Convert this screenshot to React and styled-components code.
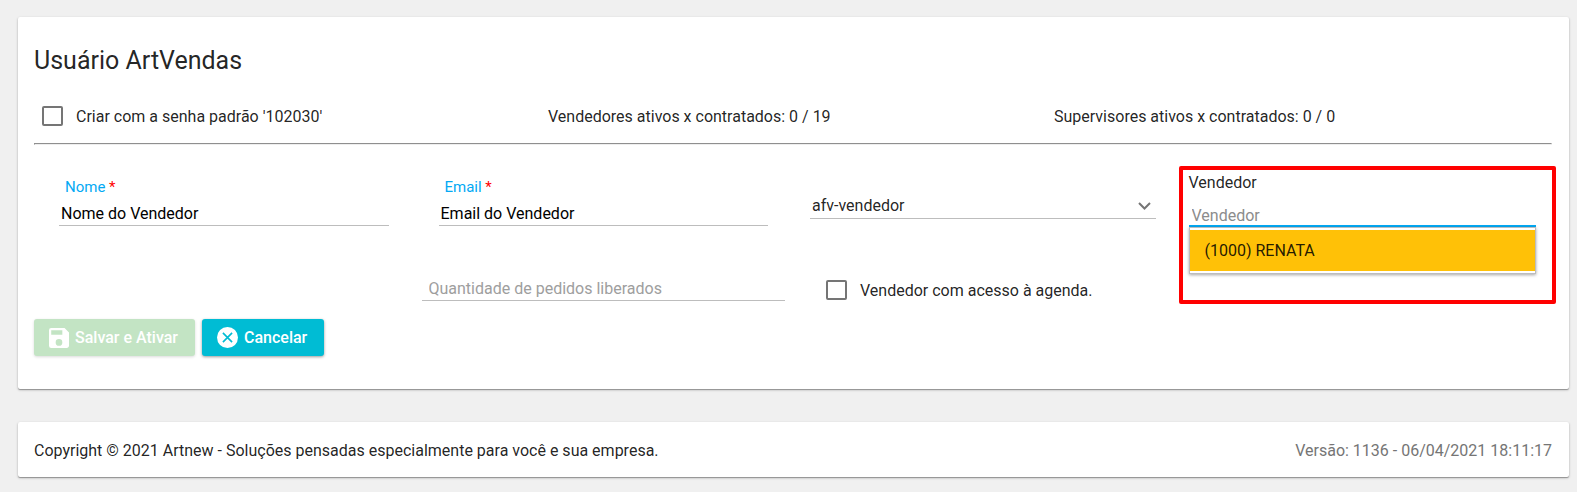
import React, { useState } from "react";
import styled, { createGlobalStyle } from "styled-components";

function App() {
  const [form, setForm] = useState({
    nome: "Nome do Vendedor",
    email: "Email do Vendedor",
    perfil: "afv-vendedor",
    vendedor: "",
    quantidade: "",
    senhaPadrao: false,
    agenda: false,
  });

  const handleChange = (e) => {
    const { name, type, value, checked } = e.target;
    setForm({ ...form, [name]: type === "checkbox" ? checked : value });
  };

  return (
    <Page>
      <GlobalStyle />
      <FormCard onSubmit={(e) => e.preventDefault()}>
        <Title>Usuário ArtVendas</Title>
        <InfoRow>
          <CheckLabel>
            <CheckBox
              type="checkbox"
              name="senhaPadrao"
              checked={form.senhaPadrao}
              onChange={handleChange}
            />
            Criar com a senha padrão '102030'
          </CheckLabel>
          <div>Vendedores ativos x contratados: 0 / 19</div>
          <div>Supervisores ativos x contratados: 0 / 0</div>
        </InfoRow>
        <Divider />
        <FieldRow>
          <Field $pd="10px 25px 0">
            <FloatLabel htmlFor="nome">
              Nome <Required>*</Required>
            </FloatLabel>
            <TextInput
              id="nome"
              name="nome"
              value={form.nome}
              onChange={handleChange}
            />
          </Field>
          <Field $pd="10px 25px 0">
            <FloatLabel htmlFor="email">
              Email <Required>*</Required>
            </FloatLabel>
            <TextInput
              id="email"
              name="email"
              value={form.email}
              onChange={handleChange}
            />
          </Field>
          <Field $pd="25px 17px 0">
            <SelectBox>
              <Select
                name="perfil"
                aria-label="Perfil"
                value={form.perfil}
                onChange={handleChange}
              >
                <option value="afv-vendedor">afv-vendedor</option>
              </Select>
              <Chevron viewBox="0 0 13 8" aria-hidden="true">
                <path d="M1 1 6.5 6.5 12 1" />
              </Chevron>
            </SelectBox>
          </Field>
          <Field $pd="6px 16px 0">
            <Highlight />
            <SellerLabel htmlFor="vendedor">Vendedor</SellerLabel>
            <Autocomplete>
              <TextInput
                id="vendedor"
                name="vendedor"
                placeholder="Vendedor"
                autoComplete="off"
                $active
                value={form.vendedor}
                onChange={handleChange}
              />
              <Menu>
                <li>
                  <MenuItem
                    type="button"
                    onClick={() =>
                      setForm({ ...form, vendedor: "(1000) RENATA" })
                    }
                  >
                    (1000) RENATA
                  </MenuItem>
                </li>
              </Menu>
            </Autocomplete>
          </Field>
        </FieldRow>
        <ExtraRow>
          <QuantityField>
            <TextInput
              name="quantidade"
              aria-label="Quantidade de pedidos liberados"
              placeholder="Quantidade de pedidos liberados"
              $wide
              value={form.quantidade}
              onChange={handleChange}
            />
          </QuantityField>
          <AgendaField>
            <CheckLabel>
              <CheckBox
                type="checkbox"
                name="agenda"
                checked={form.agenda}
                onChange={handleChange}
              />
              Vendedor com acesso à agenda.
            </CheckLabel>
          </AgendaField>
        </ExtraRow>
        <Actions>
          <Button type="submit" $color="#c3e4c4" $muted disabled>
            <svg width="20" height="20" viewBox="3 3 18 18" aria-hidden="true">
              <path
                fill="#fff"
                d="M17 3H5a2 2 0 0 0-2 2v14a2 2 0 0 0 2 2h14c1.1 0 2-.9 2-2V7l-4-4zm-5 16a3 3 0 1 1 0-6 3 3 0 0 1 0 6zm3-10H5V5h10v4z"
              />
            </svg>
            Salvar e Ativar
          </Button>
          <Button type="button" $color="#00bcd4">
            <svg width="21" height="21" viewBox="0 0 22 22" aria-hidden="true">
              <circle cx="11" cy="11" r="11" fill="#fff" />
              <path
                d="M6.2 6.2l9.6 9.6M15.8 6.2l-9.6 9.6"
                stroke="#00bcd4"
                strokeWidth="1.7"
              />
            </svg>
            Cancelar
          </Button>
        </Actions>
      </FormCard>
      <Footer>
        <div>
          Copyright © 2021 Artnew - Soluções pensadas especialmente para você e
          sua empresa.
        </div>
        <Version>Versão: 1136 - 06/04/2021 18:11:17</Version>
      </Footer>
    </Page>
  );
}

const GlobalStyle = createGlobalStyle`
  * {
    box-sizing: border-box;
  }

  body {
    margin: 0;
    background-color: #f0f0f0;
    color: rgba(0, 0, 0, 0.87);
    font-family: Roboto, "Liberation Sans", sans-serif;
    font-size: 16px;
    line-height: 24px;
  }

  input, select, button {
    font: inherit;
  }
`;

const Page = styled.main`
  display: flex;
  flex-direction: column;
  gap: 33px;
  padding: 17px 8px 15px 18px;
`;

const FormCard = styled.form`
  padding: 24px 17px 33px 16px;
  background-color: #fff;
  border-radius: 2px;
  box-shadow: 0 1px 3px rgba(0, 0, 0, 0.2), 0 1px 1px rgba(0, 0, 0, 0.3);
`;

const Title = styled.h1`
  margin: 0;
  font-size: 25px;
  font-weight: 400;
  line-height: 40px;
`;

const InfoRow = styled.div`
  display: grid;
  grid-template-columns: repeat(3, 1fr);
  align-items: center;
  margin-top: 24px;

  > * {
    margin-left: 8px;
  }
`;

const CheckLabel = styled.label`
  display: flex;
  align-items: center;
  gap: 13px;
`;

const CheckBox = styled.input`
  appearance: none;
  width: 21px;
  height: 20px;
  margin: 0 0 2px;
  border: 2px solid #757575;
  border-radius: 2px;
  background-color: #fff;

  &:checked {
    background-color: #03a9f4;
    border-color: #03a9f4;
  }
`;

const Divider = styled.hr`
  margin: 14px 0 20px;
  border: 1px solid #8f8f8f;
  border-right-color: #eee;
  border-bottom-color: #eee;
`;

const FieldRow = styled.div`
  display: grid;
  grid-template-columns: repeat(4, 1fr);
`;

const Field = styled.div`
  position: relative;
  display: flex;
  flex-direction: column;
  padding: ${(props) => props.$pd};
`;

const FloatLabel = styled.label`
  padding-left: 6px;
  font-size: 15px;
  color: #03a9f4;
`;

const Required = styled.span`
  color: #f00;
`;

const TextInput = styled.input`
  display: block;
  width: 100%;
  height: ${(props) => (props.$active ? "28px" : "27px")};
  padding: ${(props) => {
    if (props.$active) return "6px 3px 0";
    return props.$wide ? "2px 7px 0" : "2px 2px 0";
  }};
  border: 0;
  border-bottom: ${(props) =>
    props.$active ? "2px solid #03a9f4" : "1px solid #bdbdbd"};
  background: none;
  color: #000;
  line-height: 20px;
  outline: 0;

  &::placeholder {
    color: ${(props) => (props.$wide ? "#9e9e9e" : "#8c8c8c")};
  }
`;

const SelectBox = styled.div`
  position: relative;
`;

const Select = styled.select`
  display: block;
  appearance: none;
  width: 100%;
  height: 29px;
  padding: 4px 28px 0 2px;
  border: 0;
  border-bottom: 1px solid #bdbdbd;
  border-radius: 0;
  background: none;
  color: inherit;
  outline: 0;
`;

const Chevron = styled.svg`
  position: absolute;
  top: 12px;
  right: 5px;
  width: 13px;
  height: 8px;
  fill: none;
  stroke: #757575;
  stroke-width: 2;
  pointer-events: none;
`;

const Highlight = styled.div`
  position: absolute;
  top: 1px;
  left: 6px;
  right: -4px;
  height: 138px;
  border: 4px solid #f00;
  border-radius: 2px;
  pointer-events: none;
`;

const SellerLabel = styled.label`
  margin-bottom: 4px;
`;

const Autocomplete = styled.div`
  position: relative;
`;

const Menu = styled.ul`
  position: absolute;
  top: 100%;
  left: 0;
  right: 0;
  margin: 0;
  padding: 2px 0;
  list-style: none;
  background-color: #fff;
  border: 1px solid #bdbdbd;
  box-shadow: 0 1px 3px rgba(0, 0, 0, 0.35);
`;

const MenuItem = styled.button`
  display: block;
  width: 100%;
  height: 41px;
  padding: 0 15px;
  border: 0;
  background-color: #ffc107;
  color: inherit;
  text-align: left;
`;

const ExtraRow = styled.div`
  display: grid;
  grid-template-columns: repeat(4, 1fr);
  margin-top: 47px;
`;

const QuantityField = styled.div`
  grid-column: 2;
  padding: 0 8px;
`;

const AgendaField = styled.div`
  padding: 5px 33px 0;
`;

const Actions = styled.div`
  display: flex;
  gap: 7px;
  margin-top: 16px;
`;

const Button = styled.button`
  display: flex;
  align-items: center;
  gap: 6px;
  height: 37px;
  padding: 0 17px 0 15px;
  border: 0;
  border-radius: 3px;
  background-color: ${(props) => props.$color};
  color: #fff;
  font-weight: 500;
  box-shadow: 0 1px 3px
    ${(props) => (props.$muted ? "rgba(0, 0, 0, 0.15)" : "rgba(0, 0, 0, 0.4)")};
`;

const Footer = styled.footer`
  display: flex;
  justify-content: space-between;
  padding: 17px 17px 14px 16px;
  background-color: #fff;
  border-radius: 2px;
  box-shadow: 0 1px 3px rgba(0, 0, 0, 0.2), 0 1px 1px rgba(0, 0, 0, 0.3);
`;

const Version = styled.div`
  color: #757575;
`;

export default App;
